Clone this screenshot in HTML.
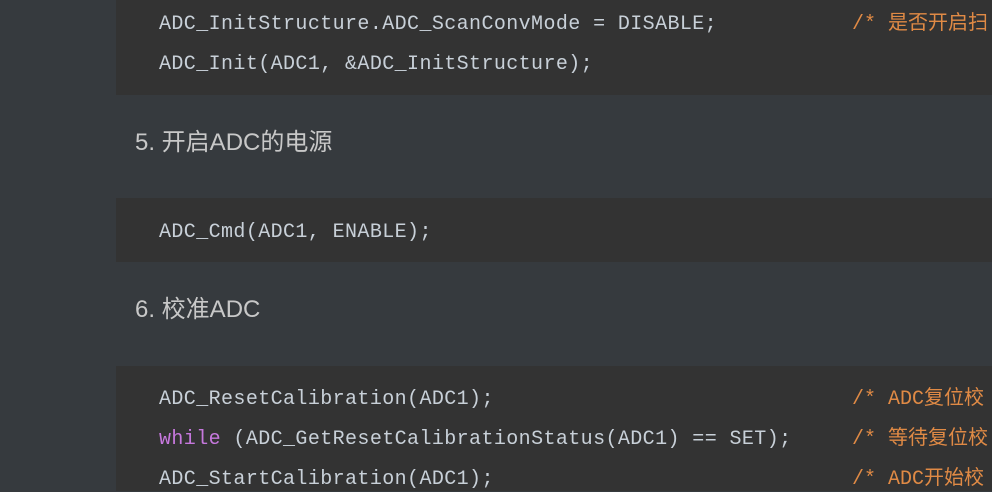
<html><head><style>
body{margin:0;width:992px;height:491px;background:#363a3e;overflow:hidden;position:relative;font-family:"Liberation Sans","Noto Sans CJK SC",sans-serif}
.b{position:absolute;left:116px;right:0;background:#333333}
.l{position:absolute;left:159px;white-space:pre;font-family:"Liberation Mono","Noto Sans CJK SC",monospace;font-size:20px;letter-spacing:0.4px;color:#c8d0d8;line-height:24px}
.c{color:#e08a45;position:absolute;left:852px;white-space:pre;font-family:"Liberation Mono","Noto Sans CJK SC",monospace;font-size:20px;line-height:24px}
.k{color:#c678dd}
h{position:absolute;left:135px;font-size:24px;color:#c8c8c8;line-height:30px}
</style></head><body>
<div class="b" style="top:0;height:95px"></div>
<div class="b" style="top:198px;height:64px"></div>
<div class="b" style="top:366px;height:125px"></div>
<div class="l" style="top:13px">ADC_InitStructure.ADC_ScanConvMode = DISABLE;</div><div class="c" style="top:13px">/* 是否开启扫</div>
<div class="l" style="top:53px">ADC_Init(ADC1, &amp;ADC_InitStructure);</div>
<h style="top:128px">5. 开启ADC的电源</h>
<div class="l" style="top:221px">ADC_Cmd(ADC1, ENABLE);</div>
<h style="top:295px">6. 校准ADC</h>
<div class="l" style="top:388px">ADC_ResetCalibration(ADC1);</div><div class="c" style="top:388px">/* ADC复位校</div>
<div class="l" style="top:428px"><span class="k">while</span> (ADC_GetResetCalibrationStatus(ADC1) == SET);</div><div class="c" style="top:428px">/* 等待复位校</div>
<div class="l" style="top:468px">ADC_StartCalibration(ADC1);</div><div class="c" style="top:468px">/* ADC开始校</div>
</body></html>
